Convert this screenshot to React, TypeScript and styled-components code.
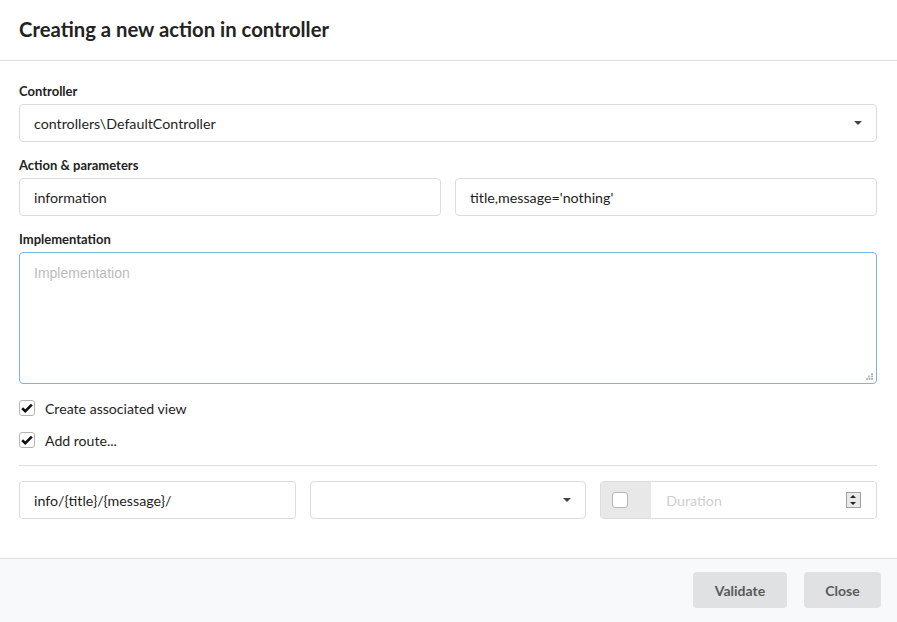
import React from "react";
import styled, { createGlobalStyle } from "styled-components";

const Global = createGlobalStyle`
  html, body { margin: 0; padding: 0; background: #fff; }
  body { font-family: Lato, "Liberation Sans", sans-serif; color: #333; }
  * { box-sizing: border-box; }
`;

const Modal = styled.div`
  width: 897px;
  height: 622px;
  display: flex;
  flex-direction: column;
  background: #fff;
`;

const Header = styled.div`
  height: 61px;
  border-bottom: 1px solid #dedede;
  display: flex;
  align-items: center;
  padding: 0 19px 2px;
  font-size: 20.3px;
  font-weight: 700;
  color: #222;
`;

const Body = styled.div`
  flex: 1;
  padding: 22px 20px 0 19px;
  display: flex;
  flex-direction: column;
`;

const Label = styled.div`
  font-size: 13px;
  font-weight: 700;
  color: #222;
  line-height: 16px;
  height: 16px;
  margin-bottom: 5px;
`;

const Field = styled.div`
  margin-bottom: 15px;
`;

const Row = styled.div<{ cols: string }>`
  display: grid;
  grid-template-columns: ${(p) => p.cols};
  gap: 14px;
`;

const Box = styled.div`
  height: 38px;
  border: 1px solid #dcdcdc;
  border-radius: 4px;
  display: flex;
  align-items: center;
  padding: 0 14px;
  font-size: 14.25px;
  color: #1e1e1e;
  background: #fff;
`;

const SelectBox = styled(Box)`
  justify-content: space-between;
`;

const Caret = styled.span`
  width: 0;
  height: 0;
  border-left: 4px solid transparent;
  border-right: 4px solid transparent;
  border-top: 4px solid #444;
`;

const TextArea = styled.div`
  height: 132px;
  border: 1px solid #7eb3de;
  border-radius: 4px;
  padding: 12px 14px;
  font-family: "Liberation Sans", Arial, sans-serif;
  font-size: 14px;
  color: #bbb;
  position: relative;
`;

const Grip = styled.svg`
  position: absolute;
  right: 3px;
  bottom: 3px;
`;

const CheckRow = styled.div`
  display: flex;
  align-items: center;
  gap: 10px;
  height: 16px;
  font-size: 14.1px;
  color: #1e1e1e;
  margin-top: 16px;
`;

const CheckBox = styled.span`
  width: 16px;
  height: 16px;
  border: 1px solid #b5b5b5;
  border-radius: 3px;
  background: #fff;
  display: inline-flex;
  align-items: center;
  justify-content: center;
`;

const Divider = styled.div`
  border-top: 1px solid #dedede;
  margin: 17px 0 15px;
`;

const Group = styled.div`
  height: 38px;
  border: 1px solid #dcdcdc;
  border-radius: 4px;
  display: flex;
  overflow: hidden;
`;

const Addon = styled.div`
  width: 50px;
  background: #e8e8e8;
  display: flex;
  align-items: center;
  padding-left: 11px;
`;

const DurationInput = styled.div`
  flex: 1;
  display: flex;
  align-items: center;
  justify-content: space-between;
  padding: 0 15px 0 15px;
  font-size: 14.25px;
  color: #cfcfcf;
`;

const Spinner = styled.div`
  width: 15px;
  height: 16px;
  border: 1px solid #a0a0a0;
  background: #eaeaea;
  display: flex;
  flex-direction: column;
  align-items: center;
  justify-content: space-around;
`;

const Tri = styled.span<{ up?: boolean }>`
  width: 0;
  height: 0;
  border-left: 3px solid transparent;
  border-right: 3px solid transparent;
  ${(p) => (p.up ? "border-bottom: 3px solid #222;" : "border-top: 3px solid #222;")}
`;

const Footer = styled.div`
  height: 64px;
  border-top: 1px solid #dedede;
  background: #f8f9fa;
  display: flex;
  justify-content: flex-end;
  align-items: center;
  gap: 17px;
  padding: 0 16px 1px;
`;

const Button = styled.button<{ w: number }>`
  width: ${(p) => p.w}px;
  height: 36px;
  border: none;
  border-radius: 4px;
  background: #e0e1e2;
  color: #5a5a5a;
  font-family: Lato, sans-serif;
  font-weight: 700;
  font-size: 14px;
`;

const Check = () => (
  <svg width="12" height="10" viewBox="0 0 12 10">
    <path d="M1.2 5.2 L4.3 8.2 L10.8 1.6" fill="none" stroke="#111" strokeWidth="2.6" />
  </svg>
);

export default function App() {
  return (
    <Modal>
      <Global />
      <Header>Creating a new action in controller</Header>
      <Body>
        <Field>
          <Label>Controller</Label>
          <SelectBox>
            <span>controllers\DefaultController</span>
            <Caret />
          </SelectBox>
        </Field>
        <Field>
          <Label>Action &amp; parameters</Label>
          <Row cols="1fr 1fr">
            <Box>information</Box>
            <Box>title,message='nothing'</Box>
          </Row>
        </Field>
        <div>
          <Label>Implementation</Label>
          <TextArea>
            Implementation
            <Grip width="7" height="7" viewBox="0 0 7 7">
              <rect x="5" y="0" width="2" height="2" fill="#bbb" />
              <rect x="2" y="2.5" width="2" height="2" fill="#bbb" />
              <rect x="5" y="2.5" width="2" height="2" fill="#bbb" />
              <rect x="0" y="5" width="2" height="2" fill="#bbb" />
              <rect x="2.5" y="5" width="2" height="2" fill="#bbb" />
              <rect x="5" y="5" width="2" height="2" fill="#bbb" />
            </Grip>
          </TextArea>
        </div>
        <CheckRow>
          <CheckBox><Check /></CheckBox>
          Create associated view
        </CheckRow>
        <CheckRow>
          <CheckBox><Check /></CheckBox>
          Add route...
        </CheckRow>
        <Divider />
        <Row cols="1fr 1fr 1fr">
          <Box>info/&#123;title&#125;/&#123;message&#125;/</Box>
          <SelectBox>
            <span />
            <Caret />
          </SelectBox>
          <Group>
            <Addon>
              <CheckBox />
            </Addon>
            <DurationInput>
              Duration
              <Spinner>
                <Tri up />
                <Tri />
              </Spinner>
            </DurationInput>
          </Group>
        </Row>
      </Body>
      <Footer>
        <Button w={94}>Validate</Button>
        <Button w={77}>Close</Button>
      </Footer>
    </Modal>
  );
}
